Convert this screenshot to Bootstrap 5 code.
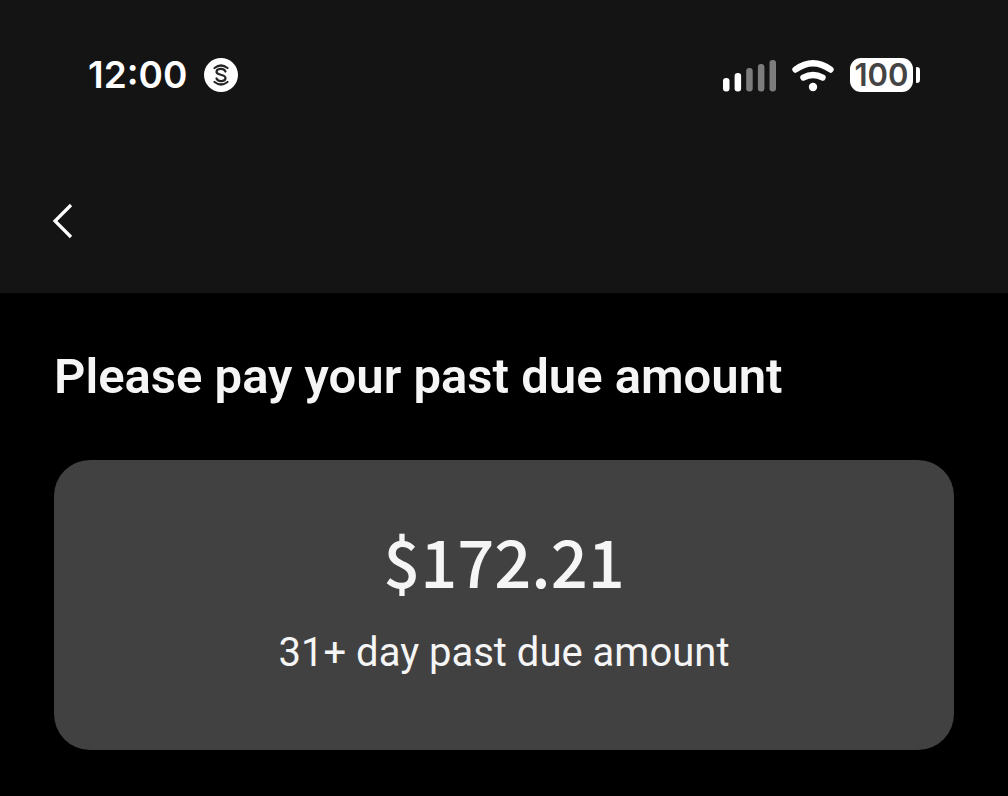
<!DOCTYPE html>
<html lang="en" data-bs-theme="dark">
<head>
<meta charset="utf-8">
<meta name="viewport" content="width=device-width, initial-scale=1">
<title>Past due amount</title>
<link rel="stylesheet" href="https://cdn.jsdelivr.net/npm/bootstrap@5.3.0/dist/css/bootstrap.min.css">
<style>
  body { background: #000; color: #f5f5f5; font-family: Roboto, sans-serif; }
  .top-area { background: #141414; padding: 55px 88px 54px; }
  .status-text { font-family: Inter, sans-serif; font-weight: 600; color: #fff; }
  .clock { font-size: 37px; line-height: 40px; }
  .status-icons { gap: 16px; }
  .battery-level { background: #fff; color: #444; width: 63px; height: 34px; border-radius: 11px; font-size: 31px; line-height: 34px; }
  .battery-tip { background: #fff; width: 4px; height: 16px; border-radius: 1px 4px 4px 1px; margin-left: 3px; }
  .back-row { margin: 104px -40px 0; }
  .back-btn { line-height: 0; }
  .content-area { padding: 56px 54px 46px; }
  .page-title { color: #f5f5f5; font-size: 49px; line-height: 56px; font-weight: 600; margin-bottom: 55px; }
  .due-card { background: #414141; border-radius: 36px; padding: 60px 24px 71px; }
  .due-amount { font-family: "Noto Sans CJK JP", sans-serif; font-weight: 500; font-size: 65px; line-height: 80px; margin-bottom: 27px; }
  .due-label { font-size: 40px; line-height: 52px; }
</style>
<script src="https://cdn.jsdelivr.net/npm/bootstrap@5.3.0/dist/js/bootstrap.bundle.min.js" defer></script>
</head>
<body>
<header class="top-area">
  <div class="d-flex align-items-center justify-content-between">
    <div class="d-flex align-items-center gap-3">
      <span class="clock status-text">12:00</span>
      <svg width="36" height="40" viewBox="0 0 36 40" fill="none" aria-hidden="true">
        <circle cx="18" cy="20" r="17" fill="#fff"/>
        <g stroke="#252525" stroke-width="2.200" stroke-linecap="round">
          <path d="M11.500 13Q18 8 24.500 13"/>
          <path d="M11.500 27Q18 32 24.500 27"/>
          <path d="M22.500 16.500C20.500 12.500 13.500 13.500 13.500 17C13.500 20.500 22.500 19 22.500 23C22.500 26.500 15.500 27.500 13.500 23.500"/>
        </g>
      </svg>
    </div>
    <div class="d-flex align-items-center status-icons">
      <svg width="53" height="34" viewBox="0 -2 53 34" role="img" aria-label="Signal, 2 of 5 bars">
        <rect x="0" y="18" width="6.500" height="13.500" rx="3" fill="#fff"/>
        <rect x="11.600" y="13" width="6.500" height="18.500" rx="3" fill="#fff"/>
        <rect x="23.200" y="8" width="6.500" height="23.500" rx="3" fill="#7d7d7d"/>
        <rect x="34.900" y="4" width="6.500" height="27.500" rx="3" fill="#7d7d7d"/>
        <rect x="46.500" y="0" width="6.500" height="31.500" rx="3" fill="#7d7d7d"/>
      </svg>
      <svg width="42" height="34" viewBox="0 -2 42 34" fill="none" stroke="#fff" stroke-width="6.400" stroke-linecap="round" role="img" aria-label="Wi-Fi">
        <path d="M3.500 9.500Q21-3 38.500 9.500"/>
        <path d="M11.500 17.500Q21 12.500 30.500 17.500"/>
        <circle cx="21" cy="27" r="4.200" fill="#fff" stroke="none"/>
      </svg>
      <div class="d-flex align-items-center">
        <div class="battery-level status-text text-center">100</div>
        <div class="battery-tip"></div>
      </div>
    </div>
  </div>
  <nav class="back-row d-flex" aria-label="Page">
    <button type="button" class="back-btn btn border-0 p-0" aria-label="Back">
      <svg width="32" height="40" viewBox="0 0 32 40" fill="none" stroke="#fff" stroke-width="3.200" aria-hidden="true"><path d="M23 6L7 22L23 38"/></svg>
    </button>
  </nav>
</header>
<main class="content-area">
  <h1 class="page-title">Please pay your past due amount</h1>
  <section class="due-card text-center">
    <p class="due-amount">$172.21</p>
    <p class="due-label mb-0">31+ day past due amount</p>
  </section>
</main>
</body>
</html>
